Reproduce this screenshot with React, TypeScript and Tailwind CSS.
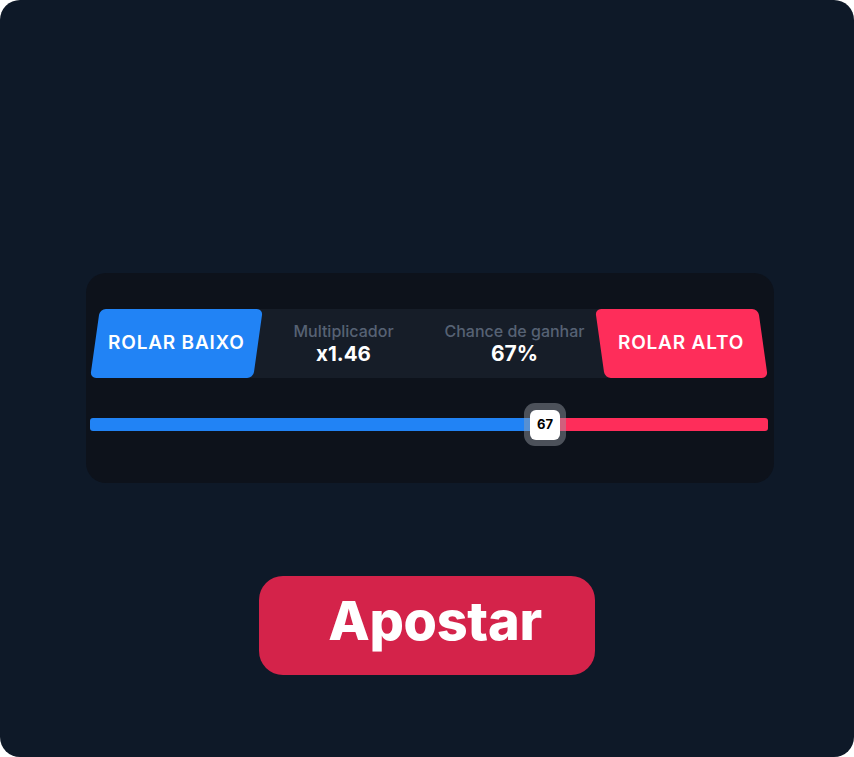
import React from "react";

const FONT = { fontFamily: "Inter, 'Noto Sans', sans-serif" };

export default function App() {
  const chance = 67;

  return (
    <div className="w-[854px] h-[757px] bg-white" style={FONT}>
      <div className="w-full h-full rounded-[20px] bg-[#0e1928] flex flex-col pt-[273px]">
        {/* Game card */}
        <div className="ml-[86px] w-[688px] h-[210px] rounded-[20px] bg-[#0d121b] pl-[4px] pr-[6px] pt-[36px]">
          <div className="flex items-stretch h-[69px]">
            <button className="relative z-10 ml-[5px] w-[163px] -skew-x-[8deg] rounded-[6px] bg-[#2183f5] flex items-center justify-center">
              <span className="skew-x-[8deg] text-white font-semibold text-[19px] tracking-[0.8px]">ROLAR BAIXO</span>
            </button>
            <div className="flex-1 -mx-[8px] bg-[#161d28] flex px-[8px]">
              <div className="flex-1 flex flex-col items-center justify-center">
                <span className="text-[16px] text-[#566274] font-medium leading-[20px]">Multiplicador</span>
                <span className="text-[20.5px] text-white font-bold leading-[26px]">x1.46</span>
              </div>
              <div className="flex-1 flex flex-col items-center justify-center">
                <span className="text-[16px] text-[#566274] font-medium leading-[20px]">Chance de ganhar</span>
                <span className="text-[21px] text-white font-bold leading-[26px]">{chance}%</span>
              </div>
            </div>
            <button className="relative z-10 mr-[5px] w-[163px] skew-x-[8deg] rounded-[6px] bg-[#fe2d5a] flex items-center justify-center">
              <span className="-skew-x-[8deg] text-white font-semibold text-[19px] tracking-[0.8px]">ROLAR ALTO</span>
            </button>
          </div>

          {/* Slider */}
          <div className="relative mt-[40px] h-[13px] flex">
            <div className="h-full w-[455px] bg-[#2183f5] rounded-l-[3px]" />
            <div className="h-full flex-1 bg-[#fe2d5a] rounded-r-[3px]" />
            <div className="absolute left-[434px] -top-[15px] w-[42px] h-[43px] rounded-[11px] bg-[#9aa0a8]/45 flex items-center justify-center">
              <div className="w-[30px] h-[30px] rounded-[6px] bg-white flex items-center justify-center text-[13px] font-bold text-black">
                {chance}
              </div>
            </div>
          </div>
        </div>

        {/* Bet button */}
        <button className="ml-[259px] mt-[93px] w-[336px] h-[99px] rounded-[24px] bg-[#d4234a] flex items-center justify-center pl-[16px] pb-[10px]">
          <span className="text-white font-extrabold text-[54px] leading-none tracking-[-0.3px]">Apostar</span>
        </button>
      </div>
    </div>
  );
}
